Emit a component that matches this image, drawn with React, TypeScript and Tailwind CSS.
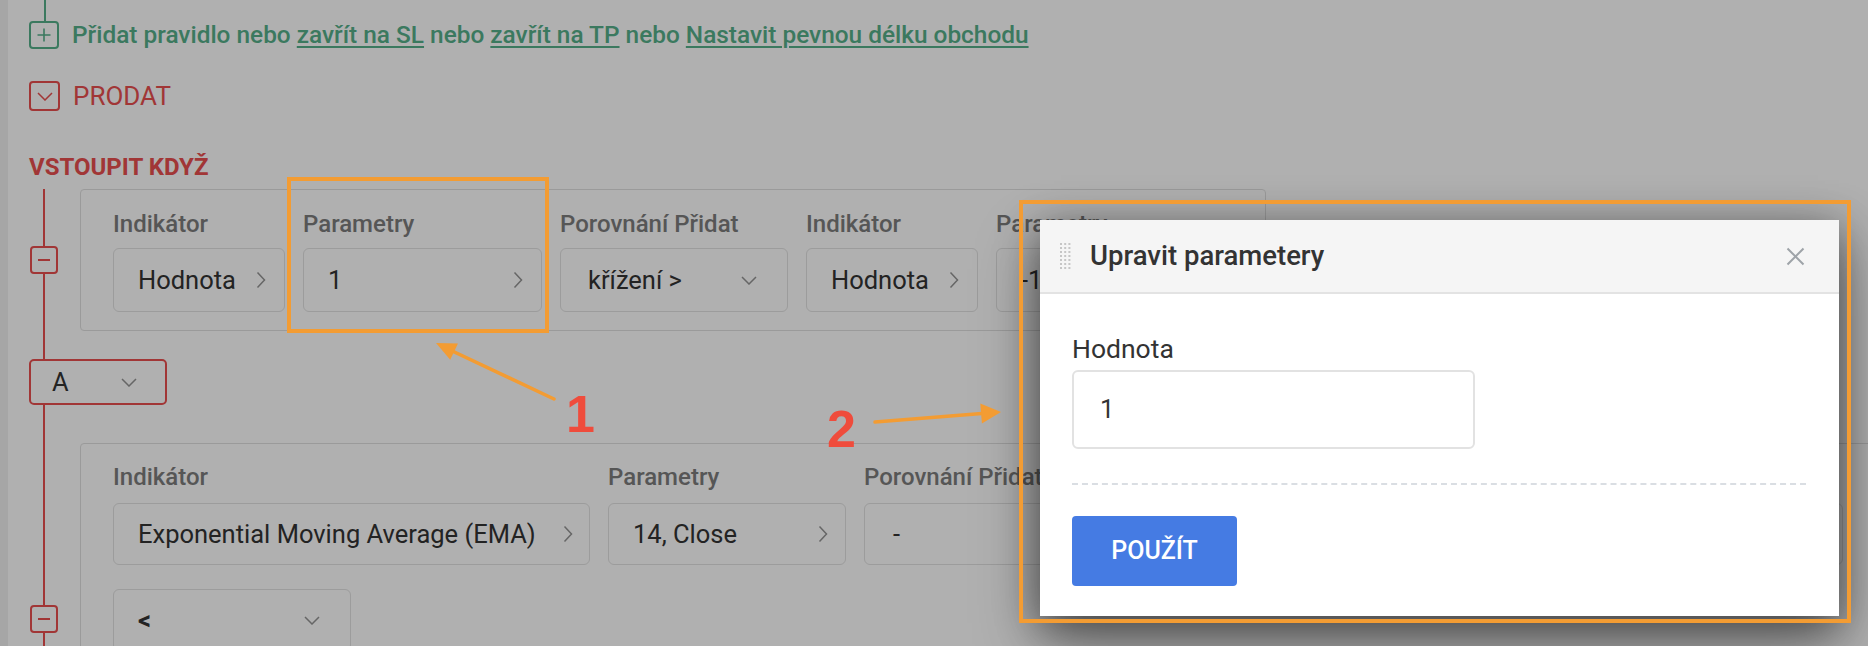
import React from "react"

const RED = "#e94f4f"
const GREEN = "#56b08a"

function ChevronRight() {
  return (
    <svg width="10" height="18" viewBox="0 0 10 18" className="shrink-0">
      <polyline points="1.5,1.5 8.5,9 1.5,16.5" fill="none" stroke="#949494" strokeWidth="1.5" />
    </svg>
  )
}

function ChevronDown({ color = "#949494" }: { color?: string }) {
  return (
    <svg width="16" height="9" viewBox="0 0 16 9" className="shrink-0">
      <polyline points="1,1 8,8 15,1" fill="none" stroke={color} strokeWidth="1.5" />
    </svg>
  )
}

function Box({ w, h = 64, pl = "pl-6", pr = "pr-[18px]", down, children }: { w: number; h?: number; pl?: string; pr?: string; down?: boolean; children: React.ReactNode }) {
  return (
    <div
      className={`flex shrink-0 items-center justify-between rounded-[6px] border border-[#e2e2e2] text-[25.5px] text-[#333] ${pl} ${pr}`}
      style={{ width: w, height: h }}
    >
      <span className="whitespace-nowrap">{children}</span>
      {down ? <ChevronDown /> : <ChevronRight />}
    </div>
  )
}

function Field({ label, gap = "mb-[10px]", children }: { label: string; gap?: string; children: React.ReactNode }) {
  return (
    <div className="flex shrink-0 flex-col">
      <div className={`h-[28px] whitespace-nowrap text-[24px] font-medium leading-[28px] text-[#7d7d7d] ${gap}`}>{label}</div>
      {children}
    </div>
  )
}

function Minus() {
  return (
    <div className="flex h-[28px] w-[28px] shrink-0 items-center justify-center rounded-[4px] border-2 border-[#e94f4f] bg-white">
      <div className="h-[2px] w-[12px] bg-[#e94f4f]" />
    </div>
  )
}

function Rail() {
  return (
    <div className="flex w-[30px] shrink-0 flex-col items-center">
      <div className="w-[2px] flex-1 bg-[#e94f4f]" />
      <Minus />
      <div className="w-[2px] flex-1 bg-[#e94f4f]" />
    </div>
  )
}

const link = "underline decoration-2 underline-offset-[3px]"

export default function App() {
  return (
    <div className="relative flex h-[646px] w-[1868px] overflow-hidden bg-white font-[Roboto,sans-serif]">
      <div className="w-[8px] shrink-0 bg-[#f1f1f1]" />

      <div className="min-w-0 flex-1 pl-[21px]">
        <div className="ml-[15px] h-[21px] w-[2px]" style={{ background: GREEN }} />
        <div className="flex h-[28px] items-center gap-[13px] text-[#56b08a]">
          <div className="flex h-[28px] w-[30px] shrink-0 items-center justify-center rounded-[4px] border-2 border-[#56b08a]">
            <svg width="14" height="14" viewBox="0 0 14 14">
              <path d="M7 0.5V13.5M0.5 7H13.5" stroke={GREEN} strokeWidth="1.6" />
            </svg>
          </div>
          <p className="whitespace-nowrap text-[24.4px] font-medium">
            Přidat pravidlo nebo <a className={link}>zavřít na SL</a> nebo <a className={link}>zavřít na TP</a> nebo{" "}
            <a className={link}>Nastavit pevnou délku obchodu</a>
          </p>
        </div>

        <div className="mt-[32px] flex h-[30px] items-center gap-[13px] text-[#e94f4f]">
          <div className="flex h-[30px] w-[31px] shrink-0 items-center justify-center rounded-[4px] border-2 border-[#e94f4f]">
            <ChevronDown color={RED} />
          </div>
          <span className="text-[26px] leading-none">PRODAT</span>
        </div>

        <div className="mt-[43px] h-[26px] text-[24px] font-bold leading-[26px] text-[#e94f4f]">VSTOUPIT KDYŽ</div>

        <div className="mt-[9px] flex">
          <Rail />
          <div className="ml-[21px] shrink-0 rounded-[4px] border border-[#dfdfdf] pb-[18px] pl-[32px] pr-[31px] pt-[20px]">
            <div className="flex gap-[18px]">
              <Field label="Indikátor"><Box w={172}>Hodnota</Box></Field>
              <Field label="Parametry"><Box w={239}>1</Box></Field>
              <Field label="Porovnání Přidat"><Box w={228} pl="pl-[27px]" pr="pr-[30px]" down>křížení &gt;</Box></Field>
              <Field label="Indikátor"><Box w={172}>Hodnota</Box></Field>
              <Field label="Parametry"><Box w={238}>-1</Box></Field>
            </div>
          </div>
        </div>

        <div className="ml-[14px] h-[28px] w-[2px] bg-[#e94f4f]" />
        <div className="flex h-[46px] w-[138px] items-center justify-between rounded-[5px] border-2 border-[#e94f4f] bg-white pl-[21px] pr-[28px] text-[25.5px] text-[#333]">
          <span>A</span>
          <ChevronDown />
        </div>
        <div className="ml-[14px] h-[38px] w-[2px] bg-[#e94f4f]" />

        <div className="flex">
          <Rail />
          <div className="ml-[21px] min-h-[352px] shrink-0 rounded-[4px] border border-[#dfdfdf] pl-[32px] pr-[31px] pt-[19px]">
            <div className="flex gap-[18px]">
              <Field label="Indikátor" gap="mb-[12px]"><Box w={477} h={62} pr="pr-[16px]">Exponential Moving Average (EMA)</Box></Field>
              <Field label="Parametry" gap="mb-[12px]"><Box w={238} h={62} pr="pr-[17px]">14, Close</Box></Field>
              <Field label="Porovnání Přidat" gap="mb-[12px]"><Box w={228} h={62} pl="pl-[28px]" pr="pr-[30px]" down>-</Box></Field>
              <Field label="Indikátor" gap="mb-[12px]"><Box w={477} h={62} pr="pr-[16px]">Exponential Moving Average (EMA)</Box></Field>
              <Field label="Parametry" gap="mb-[12px]"><Box w={238} h={62} pr="pr-[17px]">14, Close</Box></Field>
            </div>
            <div className="mt-[24px]">
              <Box w={238} h={62} pr="pr-[30px]" down>
                <b>&lt;</b>
              </Box>
            </div>
          </div>
        </div>
      </div>

      {/* overlay */}
      <div className="absolute inset-0 bg-black/[0.31]" />

      {/* modal */}
      <div className="absolute left-[1040px] top-[220px] w-[799px] bg-white shadow-[0_10px_40px_rgba(0,0,0,0.45),0_28px_60px_rgba(0,0,0,0.35)]">
        <div className="flex h-[74px] items-center border-b-2 border-[#e3e3e3] bg-[#f5f5f5] pl-[20px] pr-[34px]">
          <svg width="11" height="27" viewBox="0 0 11 27" className="shrink-0">
            {[0, 1, 2].map((c) =>
              [0, 1, 2, 3, 4, 5, 6].map((r) => (
                <rect key={`${c}-${r}`} x={c * 4.2} y={r * 4} width="2" height="2" fill="#c6c6c6" />
              ))
            )}
          </svg>
          <span className="ml-[19px] whitespace-nowrap text-[27.5px] font-medium text-[#333]">Upravit parametery</span>
          <svg width="19" height="19" viewBox="0 0 19 19" className="ml-auto">
            <path d="M1.5 1.5L17.5 17.5M17.5 1.5L1.5 17.5" stroke="#9ea3a8" strokeWidth="2" />
          </svg>
        </div>
        <div className="pb-[30px] pl-[32px] pr-[33px] pt-[40px]">
          <div className="h-[30px] text-[26.5px] leading-[30px] text-[#333]">Hodnota</div>
          <div className="mt-[6px] flex h-[79px] w-[403px] items-center rounded-[6px] border-2 border-[#e2e2e2] pl-[26px] text-[25.5px] text-[#333]">
            1
          </div>
          <div className="mt-[34px] border-t-2 border-dashed border-[#dadee3]" />
          <button className="mt-[31px] h-[70px] w-[165px] rounded-[4px] bg-[#457be3] text-[25px] font-medium text-white">
            POUŽÍT
          </button>
        </div>
      </div>

      {/* annotations */}
      <div className="absolute left-[287px] top-[177px] h-[156px] w-[262px] border-4 border-[#f39c33]" />
      <div className="absolute left-[1019px] top-[200px] h-[423px] w-[832px] border-4 border-[#f39c33]" />
      <svg className="pointer-events-none absolute left-0 top-0" width="1868" height="646">
        <line x1="554" y1="399" x2="448" y2="349" stroke="#f39c33" strokeWidth="3.5" strokeLinecap="round" />
        <polygon points="436,343 458,343.5 450.2,359.7" fill="#f39c33" />
        <line x1="875" y1="422" x2="985" y2="413.3" stroke="#f39c33" strokeWidth="3.5" strokeLinecap="round" />
        <polygon points="1001,412 981.9,423.6 980.3,403.6" fill="#f39c33" />
      </svg>
      <div className="absolute left-[566px] top-[388px] font-['Liberation_Sans',Arial,sans-serif] text-[52px] font-bold leading-[52px] text-[#ef4c3c]">
        1
      </div>
      <div className="absolute left-[827px] top-[403px] font-['Liberation_Sans',Arial,sans-serif] text-[52px] font-bold leading-[52px] text-[#ef4c3c]">
        2
      </div>
    </div>
  )
}
